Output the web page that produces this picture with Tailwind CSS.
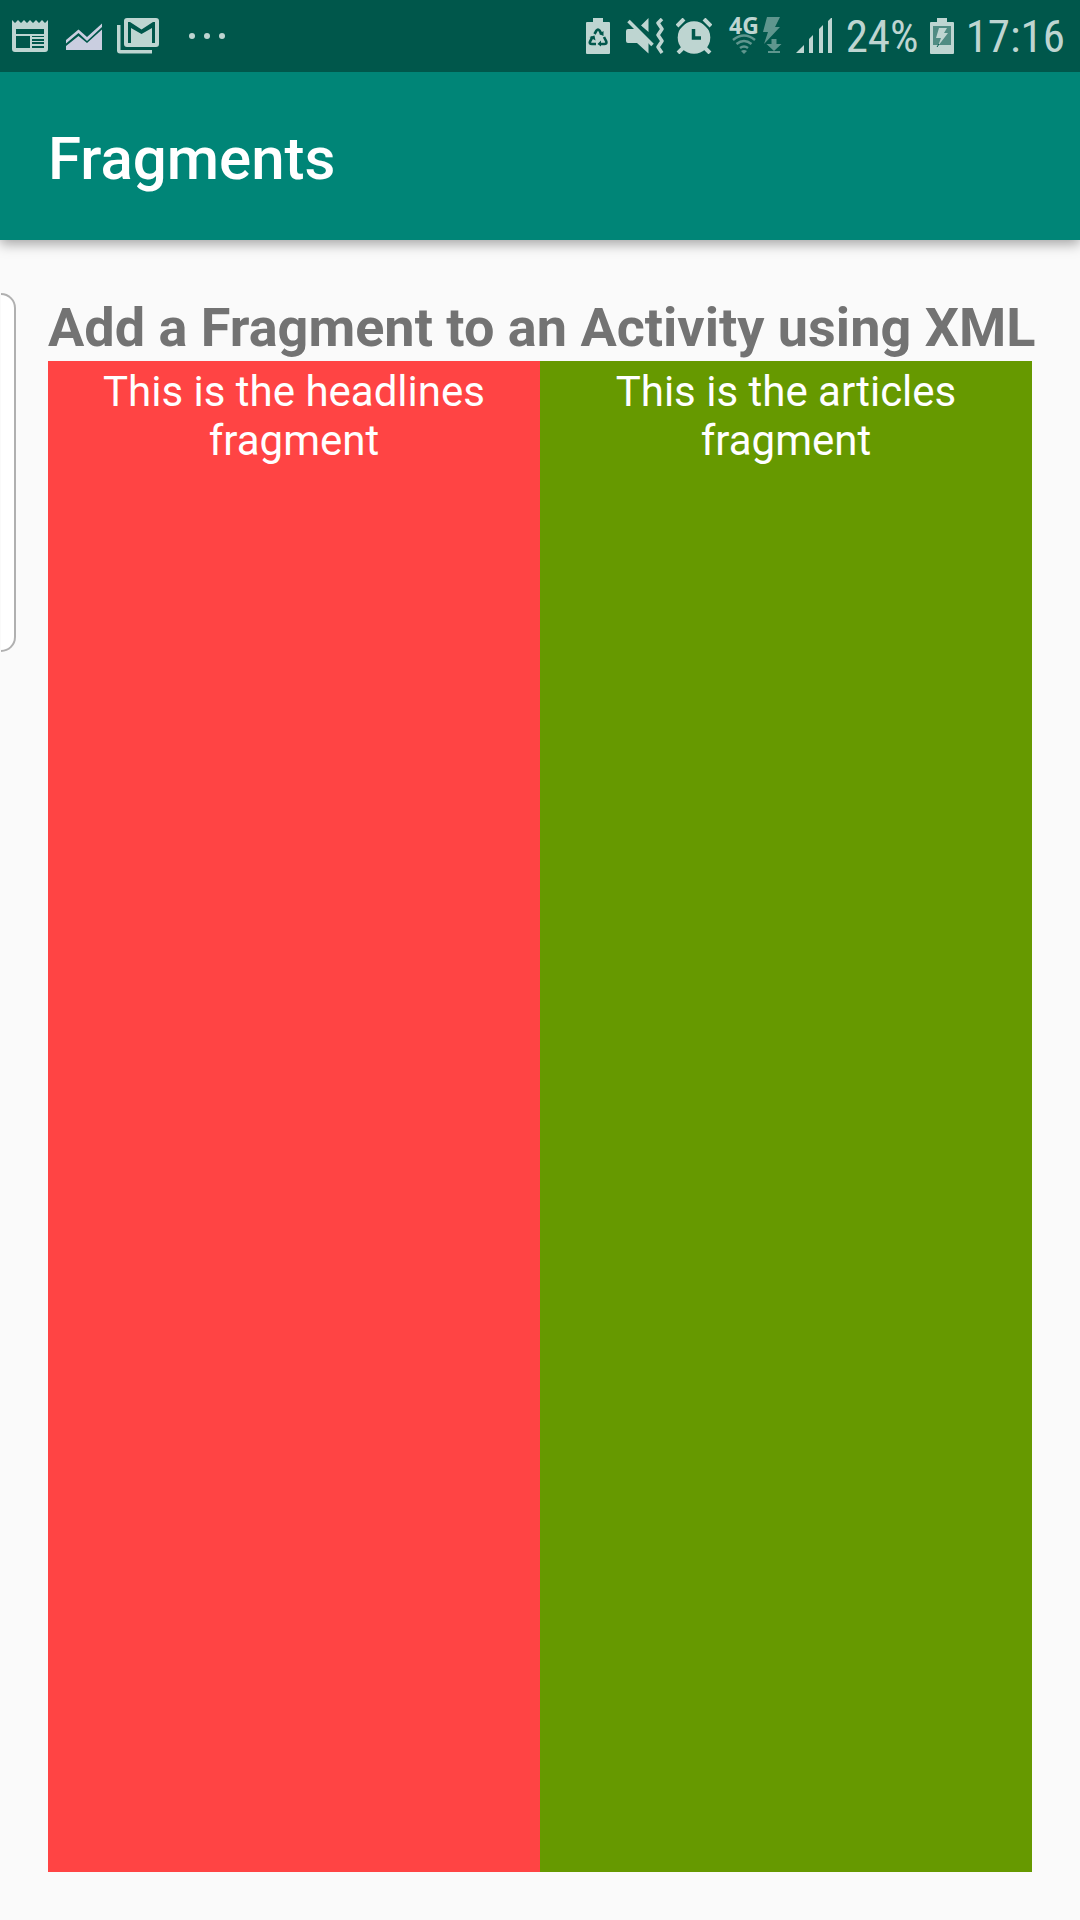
<!DOCTYPE html>
<html lang="en">
<head>
<meta charset="utf-8">
<meta name="viewport" content="width=device-width, initial-scale=1">
<title>Fragments</title>
<script src="https://cdn.jsdelivr.net/npm/@tailwindcss/browser@4"></script>
</head>
<body class="flex min-h-screen flex-col bg-[#fafafa] font-['Roboto',sans-serif]">
<!-- Status bar -->
<div class="relative z-10 flex h-[72px] items-center justify-between bg-[#00574b] pr-[15px] pl-3 text-[#bed5d1]">
  <div class="flex items-center">
    <svg class="h-9 w-9" viewBox="0 0 36 36" fill="currentColor" aria-label="News">
      <path fill-rule="evenodd" d="M0 2l3 3 3-3 3 3 3-3 3 3 3-3 3 3 3-3 3 3 3-3 3 3 3-3v29q0 3-3 3H3q-3 0-3-3zM4 11v5h28v-5zM4 18v12h14V18zM20 18v1h12v-1zM20 21v2h12v-2zM20 24v2h12v-2zM20 28v2h12v-2z"/>
    </svg>
    <svg class="ml-[18px] h-9 w-9" viewBox="0 0 36 36" fill="#cacee0" aria-label="Chart">
      <path d="M0 22L12.500 11.500 21 19 36 5.500V9L21 23 12.500 15 0 25.500zM0 28L12.500 18 21 25 36 11.500V32H0z"/>
    </svg>
    <svg class="ml-[15px] h-9 w-[42px]" viewBox="0 0 42 36" fill="currentColor" aria-label="Mail">
      <path d="M0 7h3.500v25H35v3.500H3q-3 0-3-3z"/>
      <path fill-rule="evenodd" d="M10 0h29q3 0 3 3v23q0 3-3 3H10q-3 0-3-3V3q0-3 3-3zM11 4v21h3V10l10.500 6L35 10v15h3V4h-2l-11.500 7.500L13 4z"/>
    </svg>
    <svg class="ml-[30px] h-9 w-9" viewBox="0 0 36 36" fill="currentColor" aria-label="More notifications">
      <circle cx="3" cy="18" r="3"/><circle cx="18" cy="18" r="3"/><circle cx="33" cy="18" r="3"/>
    </svg>
  </div>
  <div class="flex items-center">
    <svg class="h-9 w-6" viewBox="0 0 24 36" aria-label="Battery saver">
      <path fill="currentColor" d="M7 0h10v4h6q1 0 1 1v30q0 1-1 1H1q-1 0-1-1V5q0-1 1-1h6z"/>
      <g fill="none" stroke="#00574b" stroke-width="2.600"><path d="M8.500 16l2-3.500q1.500-2 3 0l2 3.500M18 19l2.300 4.500q.7 2.500-2 2.500H14M10 26H6q-3 0-2-2.500L6.500 19"/></g>
      <path fill="#00574b" d="M17.500 13v5l-4.500-2zM15 22.500v6L11.500 26zM3.500 19l5-1.500 1 5z"/>
    </svg>
    <svg class="ml-4 h-9 w-[38px]" viewBox="0 0 38 36" fill="currentColor" aria-label="Vibrate">
      <path d="M2 11h7l4-4 9.500 9.500V35.500L11 25H2q-2 0-2-2V13q0-2 2-2zM22.500 0v14L15 7.500z"/>
      <path d="M4 1L28 25" fill="none" stroke="#00574b" stroke-width="6"/>
      <path d="M2.500 3L26.500 27" fill="none" stroke="currentColor" stroke-width="3.600"/>
      <path d="M36 1l-4 4 4 6-4 6 4 6-4 6 4 6" fill="none" stroke="currentColor" stroke-width="3.500" stroke-linejoin="round"/>
    </svg>
    <svg class="ml-3 h-9 w-9" viewBox="0 0 36 36" fill="currentColor" aria-label="Alarm">
      <circle cx="18" cy="19.500" r="16.300"/>
      <path d="M0 10L10 0M26 0l10 10" stroke="#00574b" stroke-width="7"/>
      <path d="M1 8l7-7M28 1l7 7M7 30l-5 5M29 30l5 5" stroke="currentColor" stroke-width="4"/>
      <path d="M17.500 11v9H25" fill="none" stroke="#00574b" stroke-width="3.500"/>
    </svg>
    <svg class="ml-4 h-9 w-[52px] overflow-visible" viewBox="0 0 52 36" fill="currentColor" aria-label="4G network">
      <g opacity=".5"><path d="M39-1h13l-5 10h5L36 26l4-12h-5zM43.500 21h5v5h5l-7.500 7-7.500-7h5zM40 33h12v2H40z"/>
      <g fill="none" stroke="currentColor" stroke-width="2.500"><path d="M5 22q11-9 22 0M8.500 26q7.500-6 15 0M12 30q4-3 8 0"/></g><path d="M13 33q3-2 6 0l-3 3z"/></g>
      <text x="1" y="16" font-family="Noto Sans, sans-serif" font-weight="700" font-size="23">4G</text>
    </svg>
    <svg class="ml-4 h-9 w-9" viewBox="0 0 36 36" fill="currentColor" aria-label="Signal strength">
      <path d="M0 35l8-8v8zM13 21l4-4v18h-4zM23 11l4-4v28h-4zM32 3l4-4v36h-4z"/>
    </svg>
    <span class="ml-[14px] w-[74px] font-['Roboto_Condensed','Liberation_Sans_Narrow',sans-serif] text-[45px] leading-none">24%</span>
    <svg class="ml-[10px] h-9 w-6" viewBox="0 0 24 36" aria-label="Battery charging">
      <path fill="currentColor" d="M7 0h10v4h6q1 0 1 1v30q0 1-1 1H1q-1 0-1-1V5q0-1 1-1h6z"/>
      <path fill="#508c83" d="M3 8h18v19H3z"/>
      <path fill="currentColor" d="M9 10h8l-3 5h4L8 28l3-8H6z"/><path stroke="#00574b" d="M9 26l-2 3"/>
    </svg>
    <span class="ml-3 font-['Roboto_Condensed','Liberation_Sans_Narrow',sans-serif] text-[45px] leading-none">17:16</span>
  </div>
</div>
<!-- App bar -->
<header class="flex h-[168px] items-center bg-[#008577] px-12 pt-[6px] shadow-[0_4px_12px_rgba(0,0,0,0.35)]">
  <h1 class="text-[60px] leading-[72px] font-medium text-white">Fragments</h1>
</header>
<main class="flex flex-1 flex-col p-12">
  <h2 class="pt-[6px] text-[54px] leading-[67px] font-bold whitespace-nowrap text-[#737373]">Add a Fragment to an Activity using XML</h2>
  <div class="grid flex-1 grid-cols-2 text-center text-[42px] leading-[49px] text-white">
    <section class="bg-[#ff4444] px-12 pt-[6px]">This is the headlines fragment</section>
    <section class="bg-[#669900] px-12 pt-[6px]">This is the articles fragment</section>
  </div>
</main>
<!-- Edge panel handle, lies over the page at the left side -->
<div class="absolute top-[293px] left-px h-[359px] w-[15px] rounded-r-[15px] border-2 border-l-0 border-[#b0b0b0] bg-white"></div>
</body>
</html>
